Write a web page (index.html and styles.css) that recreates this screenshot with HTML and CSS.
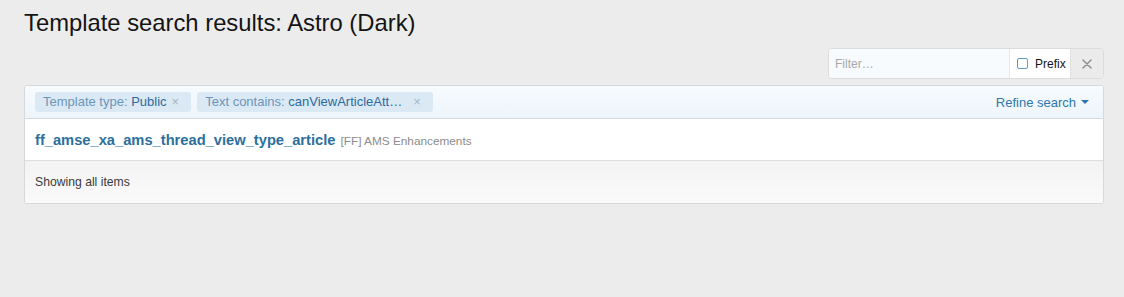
FILE: index.html
```html
<!DOCTYPE html>
<html>
<head>
<meta charset="utf-8">
<link rel="stylesheet" href="styles.css">
</head>
<body>
<div class="page">
  <h1 class="title">Template search results: Astro (Dark)</h1>
  <div class="filter-row">
    <div class="filter">
      <input class="filter-input" type="text" placeholder="Filter…">
      <label class="prefix"><span class="check"></span>Prefix</label>
      <span class="clear">
        <svg width="10" height="10" viewBox="0 0 10 10"><path d="M1 1L9 9M9 1L1 9" stroke="#8f8f8f" stroke-width="1.5" stroke-linecap="round"/></svg>
      </span>
    </div>
  </div>
  <div class="block">
    <div class="block-header">
      <div class="tags">
        <span class="tag"><span class="tag-label">Template type: </span><span class="tag-value">Public</span><span class="tag-x">×</span></span>
        <span class="tag"><span class="tag-label">Text contains: </span><span class="tag-value">canViewArticleAtt…</span><span class="tag-x tag-x-wide">×</span></span>
      </div>
      <a class="refine">Refine search <span class="caret"></span></a>
    </div>
    <div class="block-row">
      <a class="tpl-name">ff_amse_xa_ams_thread_view_type_article</a>
      <span class="tpl-addon">[FF] AMS Enhancements</span>
    </div>
    <div class="block-footer">Showing all items</div>
  </div>
</div>
</body>
</html>
```

FILE: styles.css
```css
html, body {
  margin: 0;
  padding: 0;
  background: #ececec;
  font-family: "Liberation Sans", Arial, sans-serif;
}
.page {
  padding: 9px 20px 0 24px;
}
.title {
  margin: 0;
  font-size: 23.8px;
  font-weight: 400;
  color: #141414;
  line-height: 28px;
}
.filter-row {
  display: flex;
  justify-content: flex-end;
  margin-top: 11px;
}
.filter {
  display: flex;
  height: 31px;
  box-sizing: border-box;
  border: 1px solid #dcdcdc;
  border-radius: 4px;
  background: #fff;
  overflow: hidden;
}
.filter-input {
  width: 180px;
  box-sizing: border-box;
  border: none;
  outline: none;
  background: #f7fbfe;
  padding: 0 6px;
  font-family: "Liberation Sans", Arial, sans-serif;
  font-size: 12px;
  color: #141414;
}
.filter-input::placeholder {
  color: #a8a8a8;
}
.prefix {
  display: flex;
  align-items: center;
  gap: 7px;
  width: 61px;
  box-sizing: border-box;
  padding: 0 0 0 7px;
  border-left: 1px solid #e6e6e6;
  background: #fff;
  font-size: 12px;
  color: #141414;
}
.check {
  width: 9px;
  height: 9px;
  border: 1px solid #5e9ccc;
  border-radius: 2px;
  background: #fff;
}
.clear {
  display: flex;
  align-items: center;
  justify-content: center;
  width: 32px;
  background: #ebebeb;
  border-left: 1px solid #e0e0e0;
}
.block {
  margin-top: 6px;
  border: 1px solid #d8d8d8;
  border-radius: 3px;
  background: #fff;
  overflow: hidden;
}
.block-header {
  display: flex;
  align-items: center;
  justify-content: space-between;
  height: 32px;
  padding: 0 14px 0 10px;
  background: linear-gradient(to bottom, #f7fbfe, #edf5fc);
  border-bottom: 1px solid #d8d8d8;
}
.tags {
  display: flex;
  gap: 6px;
}
.tag {
  display: inline-block;
  height: 20px;
  line-height: 20px;
  padding: 0 12px 0 8px;
  background: #dbe9f5;
  border-radius: 3px;
  font-size: 13px;
  white-space: pre;
}
.tag-label {
  color: #6b95b8;
}
.tag-value {
  color: #2c6a9c;
}
.tag-x {
  color: #a3b6c7;
  font-size: 13px;
  margin-left: 5px;
}
.tag-x-wide {
  margin-left: 11px;
}
.refine {
  font-size: 13px;
  color: #2d77ad;
  display: flex;
  align-items: center;
  gap: 5px;
}
.caret {
  width: 0;
  height: 0;
  border-left: 4px solid transparent;
  border-right: 4px solid transparent;
  border-top: 4px solid #2d77ad;
}
.block-row {
  display: flex;
  align-items: baseline;
  gap: 5px;
  height: 42px;
  box-sizing: border-box;
  padding: 13px 10px 0;
  border-bottom: 1px solid #dedede;
}
.tpl-name {
  font-size: 14.7px;
  font-weight: 700;
  color: #2b6f9e;
}
.tpl-addon {
  font-size: 11.8px;
  color: #8c8c8c;
}
.block-footer {
  height: 42px;
  display: flex;
  align-items: center;
  padding: 0 10px;
  font-size: 12.2px;
  color: #3a3a3a;
  background: linear-gradient(to bottom, #f3f3f3, #fafafa);
}
```
